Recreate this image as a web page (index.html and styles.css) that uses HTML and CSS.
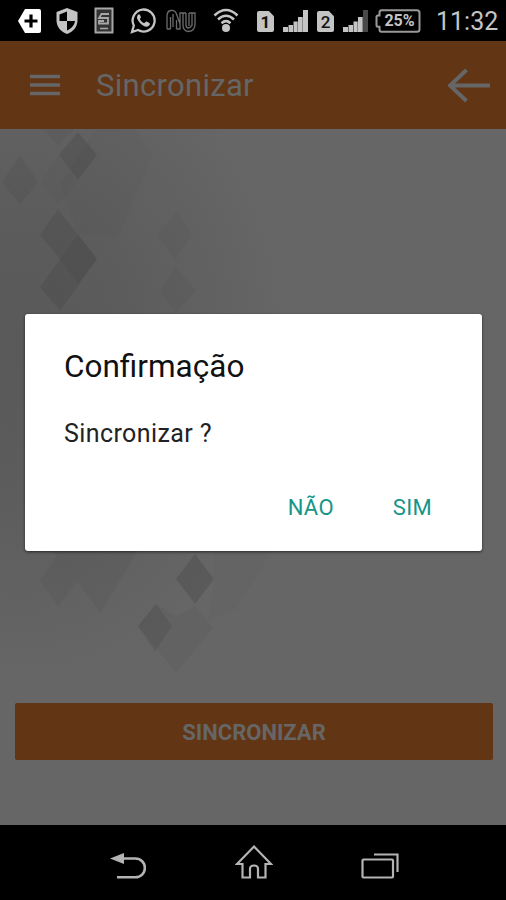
FILE: index.html
```
<!DOCTYPE html>
<html lang="pt-BR">
<head>
    <meta charset="UTF-8">
    <meta name="viewport" content="width=device-width, initial-scale=1.0">
    <title>Sincronizar</title>
    <link rel="stylesheet" href="styles.css">
</head>
<body>
    <div class="phone">
        <div class="status-bar">
            <svg class="icon-tag" width="24" height="26" viewBox="0 0 24 26">
                <path d="M7 1h14q2 0 2 2v20q0 2-2 2H7L0 13z" fill="#fff"/>
                <path d="M13 6.500v13M6.500 13h13" stroke="#000" stroke-width="3.200"/>
            </svg>
            <svg class="icon-shield" width="24" height="28" viewBox="0 0 24 28">
                <path d="M12 1l10.500 4v8c0 7-4 11.500-10.500 14C5.500 24.500 1.500 20 1.500 13V5z" fill="#c4c4c4"/>
                <path d="M12 4.500L4.500 7.500V14H12zM20 14h-8v9.500c4.500-2 7.500-5.500 8-9.500z" fill="#000"/>
            </svg>
            <svg class="icon-device" width="20" height="27" viewBox="0 0 20 27">
                <rect x="1.500" y="1.500" width="17" height="24" fill="#333" stroke="#a8a8a8" stroke-width="2"/>
                <path d="M15 7H7.500L5 11h9v5.500H5V14h5" fill="none" stroke="#a8a8a8" stroke-width="1.800"/>
                <path d="M6 21.500h8" stroke="#a8a8a8" stroke-width="1.500"/>
            </svg>
            <svg class="icon-whatsapp" width="26" height="27" viewBox="0 0 26 27">
                <path d="M2 25l1.800-6.500A11 11 0 1 1 8 23z" fill="none" stroke="#c4c4c4" stroke-width="2.300"/>
                <path d="M8.500 7.500c-3 2-1 6 2 9s7 4.500 9 1.500c.8-1.200.3-1.800-.5-2.200l-2.300-1.200c-1-.5-1.500 1.400-2.500 1.400-1.500 0-4.200-2.800-4.200-4 0-.8 1.200-1 .9-2l-1-2.200c-.3-.7-.8-.7-1.400-.3z" fill="#c4c4c4"/>
            </svg>
            <svg class="icon-nu" width="30" height="24" viewBox="0 0 30 24" fill="none" stroke="#6c6c6c" stroke-width="1.300">
                <path d="M1 20V7q0-5 4-5.500Q9 1 10.500 5L14 15M4.500 20V8M1 20h3.500M7 18V5M10.500 20v-9M10.500 20H14V4h3v12q0 6 5.500 6.500Q29 22 29 15V4h-3v13M20 4v12q0 3 2.500 3t3-3M20 4h-3M23 4v13M23 4h3"/>
            </svg>
            <svg class="icon-wifi" width="26" height="25" viewBox="0 0 26 25" fill="none" stroke="#c4c4c4" stroke-width="2.600">
                <path d="M1.500 7.500Q13-3.500 24.500 7.500M5 11.500q8-7.500 16 0M8.500 15.200q4.500-4 9 0"/>
                <circle cx="13" cy="20" r="4" fill="#c4c4c4" stroke="none"/>
            </svg>
            <div class="sim sim-one">1</div>
            <svg class="icon-signal" width="26" height="22" viewBox="0 0 26 22" fill="#c4c4c4">
                <path d="M0 17h5v5H0zM5.500 15h4.500v7H5.500zM10.500 11.500h4.200V22h-4.200zM15 7h4.700v15H15zM20 0h5v22h-5z"/>
            </svg>
            <div class="sim sim-two">2</div>
            <svg class="icon-signal" width="26" height="22" viewBox="0 0 26 22" fill="#c4c4c4">
                <path d="M0 17h5v5H0zM5.500 15h4.500v7H5.500zM10.500 11.500h4.200V22h-4.200zM15 7h4.700v15H15z"/>
                <path d="M20 0h5v22h-5z" fill="#484848"/>
            </svg>
            <div class="battery">
                <svg width="46" height="24" viewBox="0 0 46 24">
                    <path d="M6.500 1.300H42q2.500 0 2.500 2.500v16.400q0 2.500-2.500 2.500H6.500q-2 0-2-2.500v-2.500H3q-1.500 0-1.500-1.500V8q0-1.500 1.500-1.500h1.500V3.800q0-2.500 2-2.500z" fill="none" stroke="#999" stroke-width="2"/>
                </svg>
                <span class="battery-level">25%</span>
            </div>
            <div class="clock">11:32</div>
        </div>

        <div class="app">
            <div class="toolbar">
                <svg class="menu-icon" width="30" height="22" viewBox="0 0 30 22">
                    <path d="M0 2.500h30M0 11h30M0 19.500h30" stroke="#666" stroke-width="3.400"/>
                </svg>
                <h1 class="toolbar-title">Sincronizar</h1>
                <svg class="back-icon" width="42" height="35" viewBox="0 0 42 35">
                    <path d="M18.500 2L2 17.500l16.500 15.500M2 17.500h40" fill="none" stroke="#666" stroke-width="4"/>
                </svg>
            </div>

            <div class="content">
                <svg class="pattern" width="506" height="580" viewBox="0 0 506 580">
                    <defs>
                        <radialGradient id="fade" gradientUnits="userSpaceOnUse" cx="0" cy="0" r="1" gradientTransform="translate(20 220) scale(270 330)">
                            <stop offset="0" stop-color="#595959"/>
                            <stop offset="0.400" stop-color="#5c5c5c"/>
                            <stop offset="1" stop-color="#5c5c5c" stop-opacity="0"/>
                        </radialGradient>
                    </defs>
                    <rect width="300" height="560" fill="url(#fade)"/>
                    <g fill="#000">
                        <path d="M96 0h40l17 25-35 83-40-3-18-50z" opacity=".015"/>
                        <path d="M78 3l19 23-19 25-19-25z" opacity=".09"/>
                        <path d="M42 0h32l-16 16z" opacity=".04"/>
                        <path d="M20 27l18 26-18 22L2 53z" opacity=".05"/>
                        <path d="M58 27l20 26-20 22-17-22z" opacity=".015"/>
                        <path d="M58 80l39 50-37 52-20-24 20-28-20-24z" opacity=".07"/>
                        <path d="M78 105l19 25-19 25-18-25z" opacity=".04"/>
                        <path d="M177 82l15 24-17 26-18-26z" opacity=".025"/>
                        <path d="M175 137l21 25-20 22-15-22z" opacity=".03"/>
                        <path d="M45 415h97l-42 69-22-31-20 24-18-25 17-26z" opacity=".04"/>
                        <path d="M195 425l19 25-19 25-19-25z" opacity=".11"/>
                        <path d="M156 475l16 22-17 26-17-26z" opacity=".07"/>
                        <path d="M156 475l20 12 19-10 18 22-37 45-38-47z" opacity=".04"/>
                        <path d="M214 420h60l-38 60-28 12 6-42z" opacity=".02"/>
                    </g>
                </svg>
                <button class="sync-button">SINCRONIZAR</button>
            </div>

            <div class="dialog">
                <h2 class="dialog-title">Confirmação</h2>
                <p class="dialog-message">Sincronizar ?</p>
                <div class="dialog-actions">
                    <button class="dialog-button">NÃO</button>
                    <button class="dialog-button">SIM</button>
                </div>
            </div>
        </div>

        <div class="nav-bar">
            <svg width="36" height="28" viewBox="0 0 36 28">
                <path d="M12 6.500h13.500a9.300 9.300 0 0 1 0 18.800H7" fill="none" stroke="#b4b4b4" stroke-width="2.600"/>
                <path d="M0 6.500l14-5.500v11z" fill="#b4b4b4"/>
            </svg>
            <svg width="38" height="36" viewBox="0 0 38 36">
                <path d="M19 2.500L36 20h-5.500v13.500H23V25q0-3.500-4-3.500T15 25v8.500H7.500V20H2z" fill="none" stroke="#b4b4b4" stroke-width="2.200"/>
            </svg>
            <svg width="38" height="28" viewBox="0 0 38 28" fill="none" stroke="#b4b4b4" stroke-width="2.200">
                <rect x="1.500" y="7.500" width="30.500" height="18" rx="1"/>
                <path d="M13 2.500h23.500V20"/>
            </svg>
        </div>
    </div>
</body>
</html>
```
FILE: styles.css
```
* {
    box-sizing: border-box;
}
body {
    margin: 0;
    background-color: #000;
    font-family: Roboto, "Liberation Sans", sans-serif;
}
svg {
    display: block;
    flex-shrink: 0;
}
.phone {
    width: 506px;
    height: 900px;
    display: flex;
    flex-direction: column;
    overflow: hidden;
}
.status-bar {
    height: 41px;
    padding-left: 18px;
    display: flex;
    align-items: center;
    color: #c4c4c4;
}
.icon-shield { margin-left: 13px; }
.icon-device { margin-left: 15px; }
.icon-whatsapp { margin-left: 16px; }
.icon-nu { margin-left: 10px; }
.icon-wifi { margin-left: 17px; }
.icon-signal { margin-left: 9px; }
.sim {
    width: 17px;
    height: 21px;
    margin-top: 2px;
    flex-shrink: 0;
    background-color: #c4c4c4;
    color: #111;
    border-radius: 2px;
    clip-path: polygon(0 0, 70% 0, 100% 25%, 100% 100%, 0 100%);
    font-size: 17px;
    font-weight: bold;
    line-height: 22px;
    text-align: center;
}
.sim-one { margin-left: 18px; }
.sim-two { margin-left: 8px; font-weight: 500; }
.battery {
    position: relative;
    margin-left: 6px;
}
.battery-level {
    position: absolute;
    top: 0;
    left: 5px;
    width: 39px;
    font-size: 16px;
    font-weight: bold;
    line-height: 24px;
    text-align: center;
}
.clock {
    margin-left: 15px;
    padding-top: 1px;
    font-size: 25px;
    line-height: 41px;
}
.app {
    position: relative;
    height: 784px;
    display: flex;
    flex-direction: column;
    background-color: #666;
}
.toolbar {
    height: 88px;
    padding: 0 16px 0 30px;
    display: flex;
    align-items: center;
    background-color: #623515;
    color: #666;
}
.toolbar-title {
    flex-grow: 1;
    margin: 1px 0 0 36px;
    font-size: 31px;
    font-weight: normal;
    letter-spacing: 0.3px;
}
.content {
    position: relative;
    flex-grow: 1;
    display: flex;
    flex-direction: column;
    justify-content: flex-end;
    padding: 0 13px 65px 15px;
}
.pattern {
    position: absolute;
    top: 0;
    left: 0;
}
.sync-button {
    position: relative;
    height: 57px;
    padding: 2px 0 0;
    border: none;
    border-radius: 2px;
    background-color: #623515;
    color: #666;
    font-family: inherit;
    font-size: 22px;
    font-weight: bold;
}
.dialog {
    position: absolute;
    top: 273px;
    left: 25px;
    width: 457px;
    height: 237px;
    padding: 32px 50px 0 39px;
    border-radius: 3px;
    background-color: #fff;
    box-shadow: 0 1px 3px rgba(0, 0, 0, 0.6);
}
.dialog-title {
    margin: 0;
    font-size: 31.5px;
    font-weight: normal;
    line-height: 41px;
    color: #111;
}
.dialog-message {
    margin: 32px 0 0;
    font-size: 25px;
    line-height: 30px;
    letter-spacing: 0.4px;
    color: #222;
}
.dialog-actions {
    display: flex;
    justify-content: flex-end;
    gap: 59px;
    margin-top: 44px;
}
.dialog-button {
    padding: 0;
    border: none;
    background: none;
    color: #159588;
    font-family: inherit;
    font-size: 22px;
    line-height: 30px;
    letter-spacing: 0.3px;
}
.nav-bar {
    height: 75px;
    padding: 0 107px 20px 110px;
    display: flex;
    align-items: flex-end;
    justify-content: space-between;
}
```
